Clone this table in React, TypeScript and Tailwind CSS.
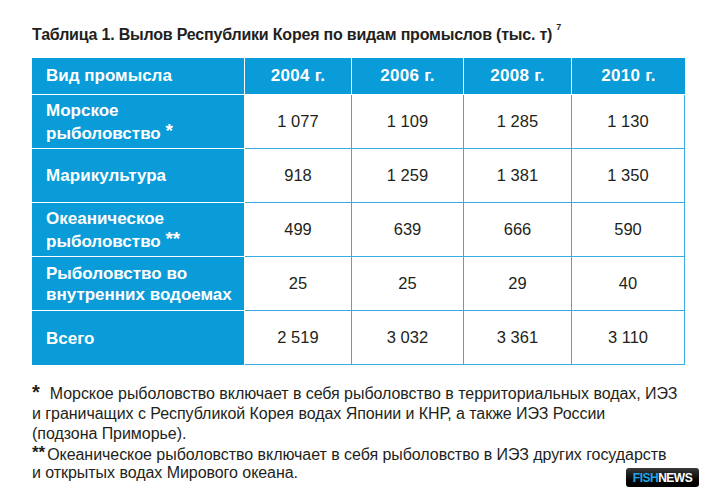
import React from "react";

const rows: { label: React.ReactNode; vals: string[] }[] = [
  {
    label: (
      <>
        Морское
        <br />
        рыболовство <span className="text-[19px] leading-none align-[2px]">*</span>
      </>
    ),
    vals: ["1 077", "1 109", "1 285", "1 130"],
  },
  { label: <>Марикультура</>, vals: ["918", "1 259", "1 381", "1 350"] },
  {
    label: (
      <>
        Океаническое
        <br />
        рыболовство <span className="text-[19px] leading-none align-[2px]">**</span>
      </>
    ),
    vals: ["499", "639", "666", "590"],
  },
  {
    label: (
      <>
        Рыболовство во
        <br />
        внутренних водоемах
      </>
    ),
    vals: ["25", "25", "29", "40"],
  },
  { label: <>Всего</>, vals: ["2 519", "3 032", "3 361", "3 110"] },
];

const years = ["2004 г.", "2006 г.", "2008 г.", "2010 г."];

export default function App() {
  return (
    <div
      className="w-[709px] h-[495px] bg-white overflow-hidden text-[#231f20] pl-[32px] pt-[26px]"
      style={{ fontFamily: '"Liberation Sans", Arial, sans-serif' }}
    >
      <div className="text-[16px] font-bold leading-[18px] tracking-[-0.2px]">
        Таблица 1. Вылов Республики Корея по видам промыслов (тыс. т)
        <sup className="text-[9px] ml-[4px] align-[6px]">7</sup>
      </div>

      <div className="mt-[14px] grid grid-cols-[213px_107px_112px_108px_113px] w-[653px]">
        <div className="h-[37px] bg-[#0a9bd9] text-white font-bold text-[17px] flex items-center pl-[14px] border-r border-b border-white">
          Вид промысла
        </div>
        {years.map((y, i) => (
          <div
            key={y}
            className={
              "h-[37px] bg-[#0a9bd9] text-white font-bold text-[17px] tracking-[0.3px] flex items-center justify-center border-b border-white " +
              (i < 3 ? "border-r" : "")
            }
          >
            {y}
          </div>
        ))}
        {rows.map((r, ri) => (
          <React.Fragment key={ri}>
            <div
              className={
                "h-[54px] bg-[#0a9bd9] text-white font-bold text-[17px] leading-[21px] flex items-center pl-[14px] border-r border-white " +
                (ri < rows.length - 1 ? "border-b" : "")
              }
            >
              <div>{r.label}</div>
            </div>
            {r.vals.map((v, vi) => (
              <div
                key={vi}
                className="h-[54px] text-[16.5px] flex items-center justify-center border-r border-b border-[#36ace2]"
              >
                {v}
              </div>
            ))}
          </React.Fragment>
        ))}
      </div>

      <div className="flex items-end">
        <div className="mt-[17px] text-[16px] leading-[20px] w-[650px] tracking-[-0.05px]">
          <div>
            <span className="text-[20px] font-bold mr-[10px]">*</span>
            Морское рыболовство включает в себя рыболовство в территориальных водах, ИЭЗ
          </div>
          <div>
            и граничащих с Республикой Корея водах Японии и КНР, а также ИЭЗ России
          </div>
          <div>(подзона Приморье).</div>
          <div className="leading-[18px]">
            <span className="text-[17px] font-bold align-[2px] mr-[2px]">**</span>
            Океаническое рыболовство включает в себя рыболовство в ИЭЗ других государств
          </div>
          <div className="leading-[18px]">и открытых водах Мирового океана.</div>
        </div>
        <div className="ml-[-56px] mb-[-5px] w-[73px] h-[19px] shrink-0 rounded-[3px] bg-gradient-to-b from-[#3a3a3a] via-[#111] to-[#000] flex items-center justify-center">
          <span className="text-[12px] font-bold tracking-[-0.5px] leading-none">
            <span className="text-[#1ea6e6]">FISH</span>
            <span className="text-white">NEWS</span>
          </span>
        </div>
      </div>
    </div>
  );
}
